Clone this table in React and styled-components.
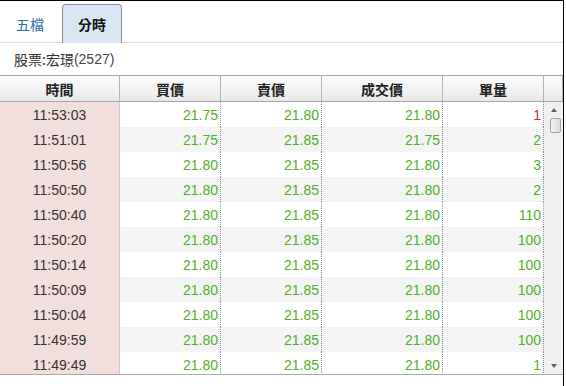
import React from 'react';
import styled, { createGlobalStyle } from 'styled-components';

const GlobalStyle = createGlobalStyle`
  html, body {
    margin: 0;
    padding: 0;
    background: #fff;
  }
  body {
    font-family: "Liberation Sans", "Noto Sans CJK TC", sans-serif;
    font-size: 14px;
    color: #333;
  }
`;

const COLS = [120, 101, 101, 121, 101];
const SCROLL_W = 19;

const Frame = styled.div`
  width: 563px;
  height: 385px;
  border-top: 1px solid #000;
  border-right: 1px solid #000;
  display: flex;
  flex-direction: column;
  overflow: hidden;
`;

const TabBar = styled.div`
  display: flex;
  align-items: flex-end;
  height: 41px;
  border-bottom: 1px solid #dcdcdc;
`;

const Tab = styled.div`
  height: ${p => (p.active ? '39px' : '40px')};
  box-sizing: border-box;
  margin-right: 2px;
  margin-bottom: -1px;
  padding: 0 15px;
  display: flex;
  align-items: center;
  font-family: "Noto Sans CJK TC", sans-serif;
  font-size: 14px;
  font-weight: ${p => (p.active ? 700 : 400)};
  color: ${p => (p.active ? '#111' : '#2f6ea5')};
  background: ${p => (p.active ? '#d9e6f3' : 'transparent')};
  border: 1px solid ${p => (p.active ? '#8a9199' : 'transparent')};
  border-bottom: none;
  border-radius: 4px 4px 0 0;
`;

const StockInfo = styled.div`
  height: 32px;
  display: flex;
  align-items: center;
  padding-left: 14px;
  font-family: "Noto Sans CJK TC", sans-serif;
  font-size: 14px;
  color: #333;

  span {
    font-family: "Liberation Sans", sans-serif;
    color: #444;
  }
`;

const HeaderRow = styled.div`
  display: flex;
  height: 25px;
  border-top: 1px solid #a8a8a8;
  border-bottom: 1px solid #a8a8a8;
  background: linear-gradient(#fdfdfd, #e8e8e8);
`;

const HeaderCell = styled.div`
  width: ${p => p.w}px;
  flex: none;
  box-sizing: border-box;
  border-right: 1px solid #b4b4b4;
  display: flex;
  align-items: center;
  justify-content: center;
  font-family: "Noto Sans CJK TC", sans-serif;
  font-weight: 700;
  font-size: 14px;
  color: #222;
`;

const BodyWrap = styled.div`
  display: flex;
  height: 272px;
  border-bottom: 1px solid #a8a8a8;
`;

const Rows = styled.div`
  flex: none;
  width: ${COLS.reduce((a, b) => a + b, 0)}px;
  overflow: hidden;
`;

const Row = styled.div`
  display: flex;
  height: 25px;
  background: ${p => (p.odd ? '#f4f4f4' : '#fff')};
`;

const TimeCell = styled.div`
  width: ${COLS[0]}px;
  flex: none;
  box-sizing: border-box;
  background: #f3dede;
  border-right: 1px solid #cbcbcb;
  display: flex;
  align-items: center;
  justify-content: center;
  color: #333;
`;

const NumCell = styled.div`
  width: ${p => p.w}px;
  flex: none;
  box-sizing: border-box;
  border-right: 1px dotted #8f8f8f;
  padding-right: 2px;
  display: flex;
  align-items: center;
  justify-content: flex-end;
  color: ${p => (p.red ? '#d3213c' : '#52b02a')};
`;

const ScrollTrack = styled.div`
  width: ${SCROLL_W}px;
  flex: none;
  background: #f0f0f0;
  display: flex;
  flex-direction: column;
  align-items: center;
`;

const Arrow = styled.div`
  width: 0;
  height: 0;
  border-left: 3.5px solid transparent;
  border-right: 3.5px solid transparent;
  ${p => (p.down ? 'border-top: 4px solid #606060;' : 'border-bottom: 4px solid #606060;')}
  margin: ${p => (p.down ? 'auto 0 6px' : '6px 0 0')};
`;

const Thumb = styled.div`
  width: 11px;
  height: 15px;
  margin-top: 6px;
  margin-left: 3px;
  box-sizing: border-box;
  border: 1px solid #a4a4a4;
  border-radius: 2px;
  background: linear-gradient(90deg, #f4f4f4, #dcdcdc);
`;

const rows = [
  ['11:53:03', '21.75', '21.80', '21.80', '1', true],
  ['11:51:01', '21.75', '21.85', '21.75', '2'],
  ['11:50:56', '21.80', '21.85', '21.80', '3'],
  ['11:50:50', '21.80', '21.85', '21.80', '2'],
  ['11:50:40', '21.80', '21.85', '21.80', '110'],
  ['11:50:20', '21.80', '21.85', '21.80', '100'],
  ['11:50:14', '21.80', '21.85', '21.80', '100'],
  ['11:50:09', '21.80', '21.85', '21.80', '100'],
  ['11:50:04', '21.80', '21.85', '21.80', '100'],
  ['11:49:59', '21.80', '21.85', '21.80', '100'],
  ['11:49:49', '21.80', '21.85', '21.80', '1'],
];

const headers = ['時間', '買價', '賣價', '成交價', '單量'];

export default function App() {
  return (
    <>
      <GlobalStyle />
      <Frame>
        <TabBar>
          <Tab>五檔</Tab>
          <Tab active>分時</Tab>
        </TabBar>
        <StockInfo>
          股票:宏璟<span>(2527)</span>
        </StockInfo>
        <HeaderRow>
          {headers.map((h, i) => (
            <HeaderCell key={h} w={COLS[i]}>
              {h}
            </HeaderCell>
          ))}
          <HeaderCell w={SCROLL_W} />
        </HeaderRow>
        <BodyWrap>
          <Rows>
            {rows.map((r, i) => (
              <Row key={r[0]} odd={i % 2 === 1}>
                <TimeCell>{r[0]}</TimeCell>
                <NumCell w={COLS[1]}>{r[1]}</NumCell>
                <NumCell w={COLS[2]}>{r[2]}</NumCell>
                <NumCell w={COLS[3]}>{r[3]}</NumCell>
                <NumCell w={COLS[4]} red={r[5]}>
                  {r[4]}
                </NumCell>
              </Row>
            ))}
          </Rows>
          <ScrollTrack>
            <Arrow />
            <Thumb />
            <Arrow down />
          </ScrollTrack>
        </BodyWrap>
      </Frame>
    </>
  );
}
